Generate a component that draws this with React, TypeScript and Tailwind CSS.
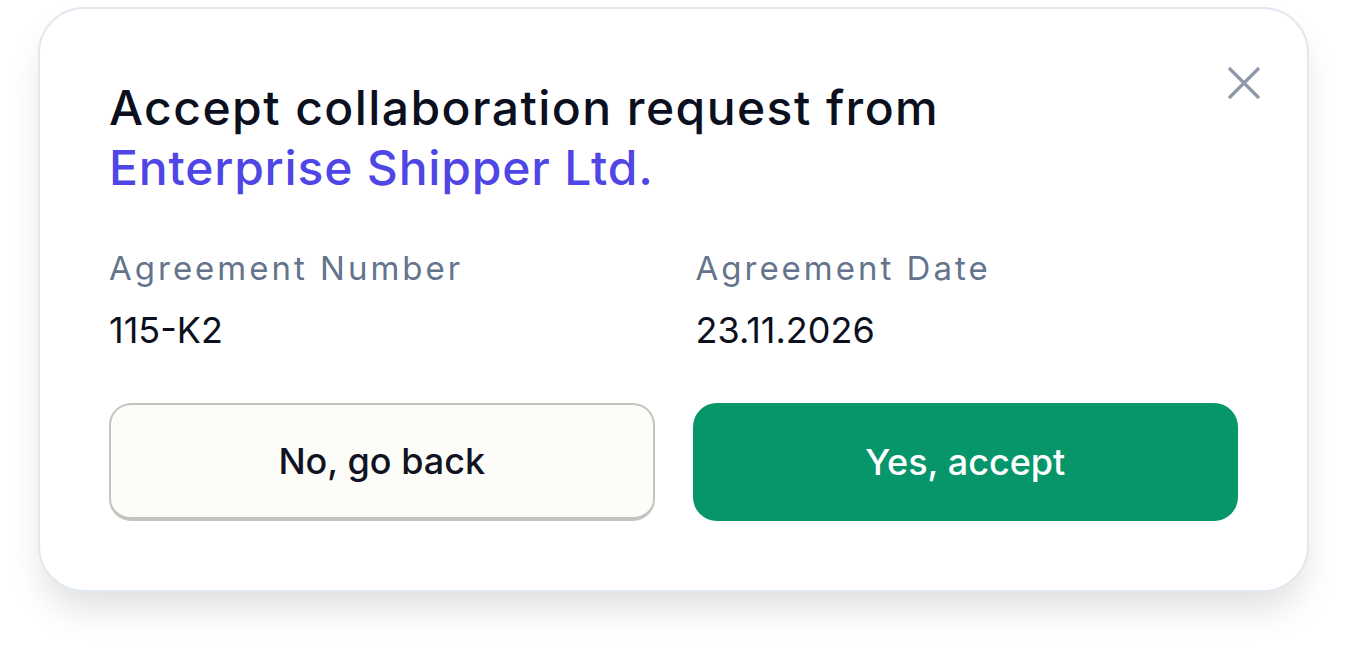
export default function App() {
  return (
    <div className="min-h-screen bg-white pt-[7px] font-['Inter',sans-serif]">
      <div className="relative mx-auto w-[1271px] rounded-[46px] border-2 border-[#e2e8f0] bg-white px-[69px] pt-[69px] pb-[69px] shadow-[0_22px_36px_-6px_rgba(0,0,0,0.13)]">
        {/* Close */}
        <button
          type="button"
          aria-label="Close"
          className="absolute right-[45px] top-[56px] flex h-9 w-9 items-center justify-center text-[#8f98a8]"
        >
          <svg width="34" height="34" viewBox="0 0 34 34" fill="none">
            <path d="M2 2L32 32M32 2L2 32" stroke="currentColor" strokeWidth="3.2" />
          </svg>
        </button>

        <h2 className="text-[48px] leading-[60px] font-medium tracking-[0.03em] text-[#0b0f1e]">
          Accept collaboration request from
          <br />
          <span className="tracking-[0.017em] text-[#4f46e5]">Enterprise Shipper Ltd.</span>
        </h2>

        <div className="mt-[50px] grid grid-cols-2 gap-x-[44px]">
          <div>
            <div className="text-[33px] leading-[40px] tracking-[3px] text-[#64748b]">Agreement Number</div>
            <div className="mt-[22px] text-[36px] leading-[40px] text-[#0b0f1e]">115-K2</div>
          </div>
          <div>
            <div className="text-[33px] leading-[40px] tracking-[3px] text-[#64748b]">Agreement Date</div>
            <div className="mt-[22px] text-[36px] leading-[40px] text-[#0b0f1e]">23.11.2026</div>
          </div>
        </div>

        <div className="mt-[53px] grid grid-cols-2 gap-x-[38px]">
          <button
            type="button"
            className="h-[118px] rounded-[22px] border-2 border-b-4 border-[#c4c4bf] bg-[#fcfcf8] text-[36px] font-medium text-[#111322]"
          >
            No, go back
          </button>
          <button
            type="button"
            className="h-[118px] rounded-[24px] bg-[#06966a] text-[36px] font-medium text-white"
          >
            Yes, accept
          </button>
        </div>
      </div>
    </div>
  );
}
